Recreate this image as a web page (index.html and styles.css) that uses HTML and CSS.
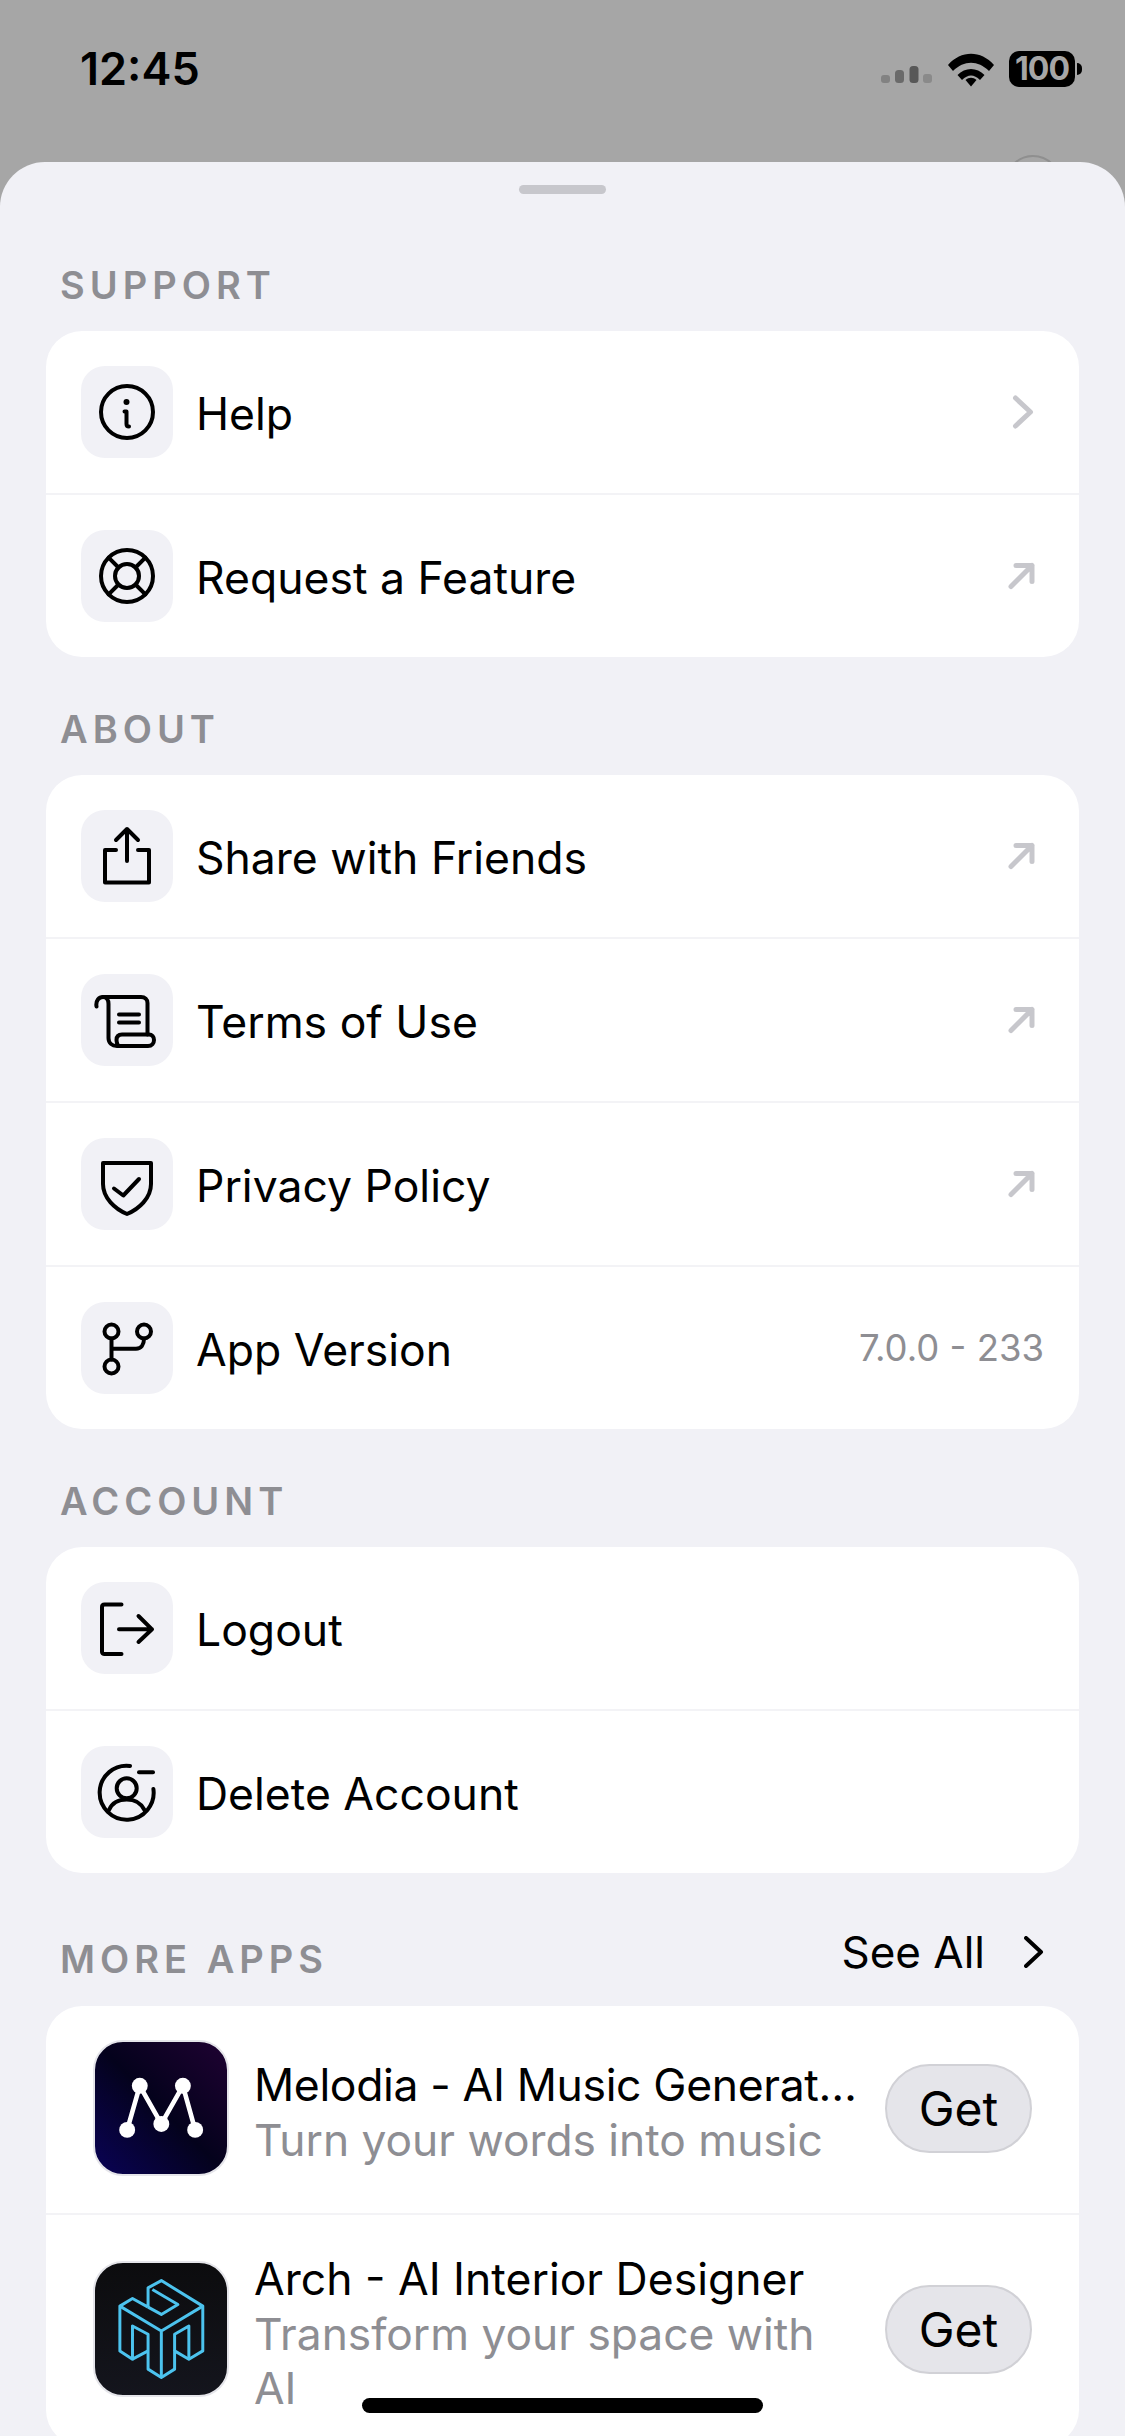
FILE: index.html
```html
<!DOCTYPE html>
<html lang="en">
<head>
    <meta charset="UTF-8">
    <meta name="viewport" content="width=device-width, initial-scale=1.0">
    <title>Settings</title>
    <link rel="stylesheet" href="styles.css">
</head>
<body>
    <div class="screen">
        <div class="status-bar">
            <div class="time">12:45</div>
            <div class="status-icons">
                <svg class="signal" viewBox="0 0 52 18" width="52" height="18">
                    <rect x="0" y="9" width="9" height="8" rx="3" fill="#828282"/>
                    <rect x="14" y="4" width="9" height="13" rx="3.5" fill="#6a6a6a"/>
                    <rect x="28.5" y="0" width="9" height="17" rx="3.5" fill="#585858"/>
                    <rect x="42" y="8" width="9" height="9" rx="3" fill="#8a8a8a"/>
                </svg>
                <svg class="wifi" viewBox="0 0 46 34" width="46" height="34">
                    <path d="M0 12C13-3 33-3 46 12L41 18C30 7 16 7 5 18Z" fill="#000"/>
                    <path d="M9.5 22C17 14 29 14 36.5 22L32 27C26 21 20 21 14 27Z" fill="#000"/>
                    <path d="M17.5 27C21 24 25 24 28.5 27L23 33.5Z" fill="#000"/>
                </svg>
                <div class="battery">100</div>
                <div class="battery-nub"></div>
            </div>
        </div>
        <div class="behind-btn"></div>

        <div class="sheet">
            <div class="handle"></div>

            <section class="section">
                <div class="section-label">SUPPORT</div>
                <div class="card">
                    <div class="row">
                        <div class="tile">
                            <svg class="icon" viewBox="0 0 92 92">
                                <circle cx="46" cy="46" r="26"/>
                                <path d="M43.5 45.5H45.5V58C45.5 59.8 46.5 60.5 48 60.5"/>
                                <circle class="fill" cx="45.5" cy="36" r="3"/>
                            </svg>
                        </div>
                        <span class="row-title">Help</span>
                        <svg class="tail" viewBox="0 0 36 36"><path d="M7.5 4L22.5 18L7.5 32"/></svg>
                    </div>
                    <div class="row">
                        <div class="tile">
                            <svg class="icon" viewBox="0 0 92 92">
                                <circle cx="46" cy="46" r="26"/>
                                <circle cx="46" cy="46" r="12"/>
                                <path d="M37.5 37.5L27.6 27.6M54.5 37.5L64.4 27.6M37.5 54.5L27.6 64.4M54.5 54.5L64.4 64.4"/>
                            </svg>
                        </div>
                        <span class="row-title">Request a Feature</span>
                        <svg class="tail" viewBox="0 0 36 36"><path d="M8 7.5H24V23.5M24 7.5L3 28.5"/></svg>
                    </div>
                </div>
            </section>

            <section class="section">
                <div class="section-label">ABOUT</div>
                <div class="card">
                    <div class="row">
                        <div class="tile">
                            <svg class="icon" viewBox="0 0 92 92">
                                <path d="M35 40H24V72.5H68V40H57"/>
                                <path d="M46 51V19M35 30L46 19L57 30"/>
                            </svg>
                        </div>
                        <span class="row-title">Share with Friends</span>
                        <svg class="tail" viewBox="0 0 36 36"><path d="M8 7.5H24V23.5M24 7.5L3 28.5"/></svg>
                    </div>
                    <div class="row">
                        <div class="tile">
                            <svg class="icon" viewBox="0 0 92 92">
                                <path d="M15.5 32.5C14.5 26.5 18 23 22 23H60C64 23 66.5 25.5 66.5 29V60.5"/>
                                <path d="M22 23C25.5 23 27.5 26 27.5 30V64C27.5 69 31 72 36 72H67C71 72 73 69 73 66C73 63 71 60.5 68 60.5H41C37 60.5 35.5 63 35.5 66C35.5 69.5 38 72 36 72"/>
                                <path d="M38 40.5H58M38 48.5H58"/>
                            </svg>
                        </div>
                        <span class="row-title">Terms of Use</span>
                        <svg class="tail" viewBox="0 0 36 36"><path d="M8 7.5H24V23.5M24 7.5L3 28.5"/></svg>
                    </div>
                    <div class="row">
                        <div class="tile">
                            <svg class="icon" viewBox="0 0 92 92">
                                <path d="M22 25H70V46C70 60 58 71 46 76C34 71 22 60 22 46Z"/>
                                <path d="M33 50.5L42.3 57.5L58 41"/>
                            </svg>
                        </div>
                        <span class="row-title">Privacy Policy</span>
                        <svg class="tail" viewBox="0 0 36 36"><path d="M8 7.5H24V23.5M24 7.5L3 28.5"/></svg>
                    </div>
                    <div class="row">
                        <div class="tile">
                            <svg class="icon" viewBox="0 0 92 92">
                                <circle cx="30.5" cy="29.5" r="7"/>
                                <circle cx="63" cy="29.5" r="7"/>
                                <circle cx="30.5" cy="64.5" r="7"/>
                                <path d="M30.5 36.5V57.5M30.5 46.7H55C60 46.7 63 43 63 36.5"/>
                            </svg>
                        </div>
                        <span class="row-title">App Version</span>
                        <span class="version">7.0.0 - 233</span>
                    </div>
                </div>
            </section>

            <section class="section">
                <div class="section-label">ACCOUNT</div>
                <div class="card">
                    <div class="row">
                        <div class="tile">
                            <svg class="icon" viewBox="0 0 92 92">
                                <path d="M40.5 22.5H23.5C22 22.5 21 23.5 21 25V70C21 71 22 72 23.5 72H40.5"/>
                                <path d="M38 47.3H71M57.5 34L71 47.3L57.5 60"/>
                            </svg>
                        </div>
                        <span class="row-title">Logout</span>
                    </div>
                    <div class="row">
                        <div class="tile">
                            <svg class="icon" viewBox="0 0 92 92">
                                <path d="M49 19.9A27 27 0 1 0 72.4 43"/>
                                <path d="M58 26.3H72"/>
                                <circle cx="45.7" cy="42.3" r="10"/>
                                <path d="M28 64C31 57 38 53.5 45.7 53.5C53 53.5 60 57 63.5 64"/>
                            </svg>
                        </div>
                        <span class="row-title">Delete Account</span>
                    </div>
                </div>
            </section>

            <section class="section">
                <div class="section-head">
                    <div class="section-label">MORE APPS</div>
                    <div class="see-all">
                        <span>See All</span>
                        <svg class="see-all-arrow" viewBox="0 0 20 32"><path d="M2 2L17 16L2 30"/></svg>
                    </div>
                </div>
                <div class="card">
                    <div class="app-row">
                        <div class="app-icon melodia">
                            <svg viewBox="105 68 398 398">
                                <path d="M202 333L240 200L305 315L370 200L407 333" fill="none" stroke="#fff" stroke-width="14" stroke-linejoin="round"/>
                                <circle cx="202" cy="333" r="24" fill="#fff"/>
                                <circle cx="240" cy="200" r="24" fill="#fff"/>
                                <circle cx="305" cy="315" r="24" fill="#fff"/>
                                <circle cx="370" cy="200" r="24" fill="#fff"/>
                                <circle cx="407" cy="333" r="24" fill="#fff"/>
                            </svg>
                        </div>
                        <div class="app-text">
                            <div class="app-name app-name-tight">Melodia - AI Music Generat…</div>
                            <div class="app-desc">Turn your words into music</div>
                        </div>
                        <button class="get-btn">Get</button>
                    </div>
                    <div class="app-row">
                        <div class="app-icon arch">
                            <svg viewBox="105 735 398 398">
                                <path d="M265 868V810L305 788L430 865V1000L388 1025L345 1000V1055L305 1080L265 1055V950L218 925V1025L180 1000V865L218 842L265 868" fill="none" stroke="#4cc3ee" stroke-width="9" stroke-linejoin="round"/>
                                <path d="M180 865L305 940L430 865M305 940V1080M278 815L355 860L305 890L265 868M218 1025L265 1000M345 1000V950L388 925V1025" fill="none" stroke="#4cc3ee" stroke-width="9" stroke-linejoin="round"/>
                            </svg>
                        </div>
                        <div class="app-text">
                            <div class="app-name">Arch - AI Interior Designer</div>
                            <div class="app-desc">Transform your space with AI</div>
                        </div>
                        <button class="get-btn get-btn-high">Get</button>
                    </div>
                </div>
            </section>
        </div>

        <div class="home-indicator"></div>
    </div>
</body>
</html>
```

FILE: styles.css
```css
* {
    box-sizing: border-box;
}
body {
    margin: 0;
    font-family: 'Inter', 'Liberation Sans', sans-serif;
    background: #a6a6a6;
    color: #000;
}
.screen {
    position: relative;
    width: 1125px;
    height: 2436px;
    overflow: hidden;
}
.status-bar {
    height: 162px;
    display: flex;
    justify-content: space-between;
    padding: 46px 43px 0 80px;
}
.time {
    font-size: 45px;
    font-weight: 600;
    line-height: 46px;
}
.status-icons {
    display: flex;
    align-items: flex-start;
    margin-top: 5px;
}
.signal {
    margin: 15px 15px 0 0;
}
.wifi {
    margin: 2px 15px 0 0;
}
.battery {
    width: 66px;
    height: 36px;
    background: #000;
    color: #a6a6a6;
    border-radius: 10px;
    font-size: 32px;
    font-weight: 700;
    line-height: 36px;
    text-align: center;
    letter-spacing: -1px;
}
.battery-nub {
    width: 5px;
    height: 12px;
    margin: 12px 0 0 2px;
    background: #000;
    border-radius: 0 6px 6px 0;
}
.behind-btn {
    position: absolute;
    left: 1005px;
    top: 155px;
    width: 56px;
    height: 56px;
    border: 2px solid #8f8f8f;
    border-radius: 50%;
}
.sheet {
    position: relative;
    background: #f1f1f6;
    border-radius: 45px 45px 0 0;
    padding: 23px 46px 0;
}
.handle {
    width: 87px;
    height: 9px;
    margin: 0 auto 68px;
    background: #c7c7cc;
    border-radius: 5px;
}
.section {
    margin-bottom: 49px;
}
.section-label {
    padding-left: 14px;
    color: #8e8e93;
    font-size: 38px;
    font-weight: 600;
    line-height: 46px;
    letter-spacing: 5px;
    margin-bottom: 23px;
}
.section-head {
    display: flex;
    justify-content: space-between;
    height: 84px;
    padding-top: 14px;
}
.see-all {
    display: flex;
    align-items: center;
    gap: 39px;
    height: 60px;
    margin-top: -14px;
    padding-right: 35px;
    font-size: 44px;
}
.see-all-arrow {
    width: 20px;
    height: 32px;
    fill: none;
    stroke: #000;
    stroke-width: 4;
    stroke-linecap: round;
    stroke-linejoin: round;
}
.card {
    background: #fff;
    border-radius: 36px;
}
.row {
    display: flex;
    align-items: center;
    padding: 35px;
    border-bottom: 2px solid #f3f3f6;
}
.row:last-child {
    border-bottom: none;
}
.tile {
    width: 92px;
    height: 92px;
    flex: none;
    background: #f1f1f6;
    border-radius: 24px;
}
.icon {
    display: block;
    width: 92px;
    height: 92px;
    fill: none;
    stroke: #000;
    stroke-width: 4;
    stroke-linecap: round;
    stroke-linejoin: round;
}
.icon .fill {
    fill: #000;
    stroke: none;
}
.row-title {
    flex: 1;
    margin: 4px 0 0 23px;
    font-size: 44.5px;
}
.tail {
    width: 36px;
    height: 36px;
    flex: none;
    fill: none;
    stroke: #c7c7cc;
    stroke-width: 5;
    stroke-linecap: round;
    stroke-linejoin: round;
}
.version {
    color: #8e8e93;
    font-size: 36.5px;
}
.app-row {
    display: flex;
    align-items: center;
    padding: 34px 47px 31px;
    border-bottom: 2px solid #f3f3f6;
}
.app-row:last-child {
    border-bottom: none;
}
.app-icon {
    width: 136px;
    height: 136px;
    flex: none;
    margin-bottom: 6px;
    border: 2px solid #e5e5ea;
    border-radius: 30px;
    overflow: hidden;
}
.app-icon svg {
    display: block;
    width: 132px;
    height: 132px;
}
.melodia {
    background: linear-gradient(45deg, #0a0356 0%, #04021c 50%, #1f0232 100%);
}
.arch {
    background: linear-gradient(180deg, #0c0c0e, #14151d);
}
.app-text {
    flex: 1;
    min-width: 0;
    margin: 2px 25px 0;
}
.app-name {
    font-size: 44.5px;
    line-height: 56px;
    white-space: nowrap;
}
.app-name-tight {
    letter-spacing: -0.35px;
}
.app-desc {
    color: #8e8e93;
    font-size: 44.3px;
    line-height: 54px;
}
.get-btn {
    width: 147px;
    height: 89px;
    flex: none;
    align-self: flex-start;
    margin-top: 24px;
    background: #e5e5ea;
    border: 2px solid #d1d1d6;
    border-radius: 45px;
    color: #000;
    font-family: inherit;
    font-size: 48px;
    padding: 0;
}
.get-btn-high {
    margin-top: 36px;
}
.home-indicator {
    position: absolute;
    left: 362px;
    top: 2398px;
    width: 401px;
    height: 15px;
    background: #000;
    border-radius: 8px;
}
```
